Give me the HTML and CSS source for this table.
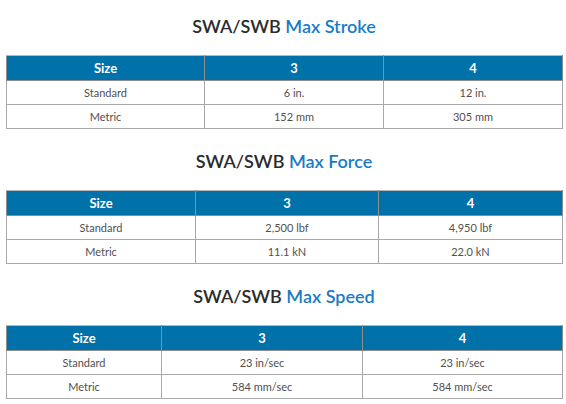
FILE: index.html
```html
<!DOCTYPE html>
<html lang="en">
<head>
    <meta charset="UTF-8">
    <meta name="viewport" content="width=device-width, initial-scale=1.0">
    <link rel="stylesheet" href="styles.css">
    <title>SWA/SWB Specs</title>
</head>
<body>
    <div class="container">
        <!-- ストローク -->
        <div class="spec">
            <h2 class="spec-title">SWA/SWB <span class="accent">Max Stroke</span></h2>
            <table class="spec-table">
                <colgroup>
                    <col style="width: 198px">
                    <col style="width: 179px">
                    <col>
                </colgroup>
                <tr>
                    <th>Size</th>
                    <th>3</th>
                    <th>4</th>
                </tr>
                <tr>
                    <td>Standard</td>
                    <td>6 in.</td>
                    <td>12 in.</td>
                </tr>
                <tr>
                    <td>Metric</td>
                    <td>152 mm</td>
                    <td>305 mm</td>
                </tr>
            </table>
        </div>
        <!-- 力 -->
        <div class="spec">
            <h2 class="spec-title">SWA/SWB <span class="accent">Max Force</span></h2>
            <table class="spec-table">
                <colgroup>
                    <col style="width: 189px">
                    <col style="width: 183px">
                    <col>
                </colgroup>
                <tr>
                    <th>Size</th>
                    <th>3</th>
                    <th>4</th>
                </tr>
                <tr>
                    <td>Standard</td>
                    <td>2,500 lbf</td>
                    <td>4,950 lbf</td>
                </tr>
                <tr>
                    <td>Metric</td>
                    <td>11.1 kN</td>
                    <td>22.0 kN</td>
                </tr>
            </table>
        </div>
        <!-- 速度 -->
        <div class="spec">
            <h2 class="spec-title">SWA/SWB <span class="accent">Max Speed</span></h2>
            <table class="spec-table">
                <colgroup>
                    <col style="width: 155px">
                    <col style="width: 201px">
                    <col>
                </colgroup>
                <tr>
                    <th>Size</th>
                    <th>3</th>
                    <th>4</th>
                </tr>
                <tr>
                    <td>Standard</td>
                    <td>23 in/sec</td>
                    <td>23 in/sec</td>
                </tr>
                <tr>
                    <td>Metric</td>
                    <td>584 mm/sec</td>
                    <td>584 mm/sec</td>
                </tr>
            </table>
        </div>
    </div>
</body>
</html>
```

FILE: styles.css
```css
body {
    margin: 0;
    background-color: #fff;
    font-family: Lato, "Open Sans", sans-serif;
}
.container {
    padding: 14px 4px 0 6px;
}
.spec {
    margin-bottom: 20px;
}
/* タイトル */
.spec-title {
    margin: 0 0 17px;
    text-align: center;
    font-size: 18px;
    font-weight: 600;
    line-height: 24px;
    color: #2b2b2b;
}
.accent {
    color: #1a7bc6;
}
/* 表 */
.spec-table {
    width: 557px;
    border-collapse: collapse;
    table-layout: fixed;
    border: 1px solid #a9a9a9;
}
.spec-table th {
    height: 24px;
    padding: 0;
    background-color: #0071a9;
    color: #fff;
    font-size: 13px;
    font-weight: 700;
    border: 1px solid #8d8d8d;
    border-top-color: #b8b8b8;
}
.spec-table td {
    height: 23px;
    padding: 0;
    text-align: center;
    font-size: 11px;
    color: #505050;
    border: 1px solid #a9a9a9;
}
```
